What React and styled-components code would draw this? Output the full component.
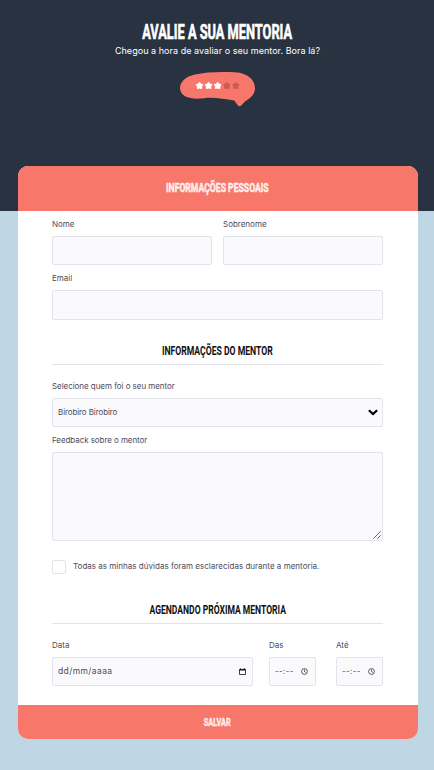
import React from 'react';
import styled, { createGlobalStyle } from 'styled-components';

const GlobalStyle = createGlobalStyle`
  * { box-sizing: border-box; }
  body {
    margin: 0;
    background: #bfd6e4;
    font-family: Inter, "Liberation Sans", sans-serif;
    color: #4e4b58;
  }
`;

const Page = styled.div`
  height: 770px;
  overflow: hidden;
  background: #bfd6e4;
`;

const Hero = styled.header`
  height: 211px;
  padding-top: 20px;
  display: flex;
  flex-direction: column;
  align-items: center;
  background: #293241;
  color: #fff;
`;

const Condensed = styled.span`
  display: block;
  white-space: nowrap;
  font-family: Roboto, "Liberation Sans", sans-serif;
  font-weight: 700;
  font-size: ${(p) => p.$size}px;
  -webkit-text-stroke: ${(p) => p.$stroke || 0}px currentColor;
  transform: scaleX(${(p) => p.$squeeze});
`;

const Title = styled.h1`
  margin: 0;
  height: 24px;
  line-height: 25px;
`;

const Subtitle = styled.p`
  margin: 0 0 0 1px;
  font-size: 9px;
  line-height: 14px;
  letter-spacing: 0.04px;
`;

const Bubble = styled.svg`
  display: block;
  width: 76px;
  height: 36px;
  margin: 13px 0 0 2px;
`;

const Card = styled.form`
  width: 400px;
  height: 573px;
  margin: -45px 0 0 18px;
  display: flex;
  flex-direction: column;
  border-radius: 10px;
  overflow: hidden;
  background: #fff;
`;

const CardHeader = styled.h2`
  margin: 0;
  height: 45px;
  padding: 0 1px 2px 0;
  display: flex;
  align-items: center;
  justify-content: center;
  background: #f7776a;
  color: #ffefed;
`;

const CardBody = styled.div`
  flex: 1;
  padding: 6px 35px 0 34px;
`;

const SectionTitle = styled.h2`
  margin: ${(p) => p.$top}px 0 14px;
  height: 26px;
  padding-top: 4px;
  line-height: 16px;
  display: flex;
  justify-content: center;
  border-bottom: 1px solid #e4e4ea;
  color: #111;
`;

const Row = styled.div`
  display: grid;
  grid-template-columns: ${(p) => p.$columns};
  column-gap: ${(p) => p.$gap || 0}px;
  justify-content: space-between;
`;

const Field = styled.div`
  height: 54px;
`;

const Label = styled.label`
  display: block;
  height: 19px;
  line-height: 14px;
  font-size: 8px;
  letter-spacing: ${(p) => p.$spacing || 0}px;
`;

const Control = styled.div`
  height: ${(p) => p.$height || 29}px;
  padding: 0 ${(p) => p.$padRight || 5}px 0 5px;
  display: flex;
  align-items: center;
  justify-content: space-between;
  border: 1px solid #e3e3ec;
  border-radius: 2px;
  background: #fafafc;
  font-size: 8px;
  line-height: 12px;
`;

const Value = styled.span`
  padding-bottom: 2px;
  white-space: nowrap;
  letter-spacing: ${(p) => p.$spacing || 0}px;
`;

const DateText = styled(Value)`
  font-size: 8.5px;
  letter-spacing: 0.4px;
`;

const TextArea = styled(Control)`
  height: 89px;
  align-items: flex-end;
  justify-content: flex-end;
  padding: 0 1px 1px;
`;

const Icon = styled.svg`
  display: block;
  flex: none;
  width: ${(p) => p.$w}px;
  height: ${(p) => p.$h}px;
`;

const CheckLine = styled.label`
  margin-top: 19px;
  height: 14px;
  display: flex;
  align-items: center;
  gap: 7px;
  font-size: 8px;
  letter-spacing: 0.02px;
`;

const CheckBox = styled.span`
  width: 14px;
  height: 14px;
  border: 1px solid #e3e3ec;
  border-radius: 2px;
`;

const SaveButton = styled.button`
  height: 34px;
  padding: 0 2px 0 0;
  border: 0;
  display: flex;
  align-items: center;
  justify-content: center;
  background: #f7776a;
  color: #ffefed;
`;

const TimeGroup = styled.div`
  width: 114px;
  display: flex;
  justify-content: space-between;
`;

const TimeSlot = styled(Field)`
  width: 47px;
`;

const STAR =
  'M0-3.9 1.5-2 3.9-1.3 2.6.9 2.6 3.3 0 2.8-2.6 3.3-2.6.9-3.9-1.3-1.5-2Z';

function Rating() {
  return (
    <Bubble viewBox="0 0 76 36">
      <path
        fill="#f7776a"
        d="M0 17.2C0 11 5.500 5.500 15 3.500C26 .8 41 .5 55 1.200C68 2 75 9 75 17.500C75 22.500 71.500 26.500 66 29.800C64.300 31.200 63 32.500 61.500 34.200C60 35.900 58.300 35.400 57.200 33.600L54.300 29.400C44 28 33 25.700 24 27.200C17 28 10 28 5 25.300C1.500 23 0 20 0 17.200Z"
      />
      {[19.5, 28.6, 37.7, 46.8, 55.8].map((x, i) => (
        <path
          key={x}
          d={STAR}
          transform={`translate(${x} 14.700) scale(.86)`}
          fill={i < 3 ? '#fff' : '#cc5c54'}
          stroke={i < 3 ? '#fff' : '#cc5c54'}
          strokeWidth="1.1"
          strokeLinejoin="round"
        />
      ))}
    </Bubble>
  );
}

function ClockIcon() {
  return (
    <Icon $w={7} $h={7} viewBox="0 0 7 7" fill="none" stroke="#333">
      <circle cx="3.5" cy="3.5" r="2.9" strokeWidth=".8" />
      <path d="M3.500 1.600V3.600L4.900 4.400" strokeWidth=".8" />
    </Icon>
  );
}

function TimeField({ label }) {
  return (
    <TimeSlot>
      <Label>{label}</Label>
      <Control $padRight={7}>
        <Value $spacing={0.35}>--:--</Value>
        <ClockIcon />
      </Control>
    </TimeSlot>
  );
}

export default function App() {
  return (
    <>
      <GlobalStyle />
      <Page>
        <Hero>
          <Title>
            <Condensed $size={19.5} $squeeze={0.656} $stroke={0.6}>AVALIE A SUA MENTORIA</Condensed>
          </Title>
          <Subtitle>Chegou a hora de avaliar o seu mentor. Bora lá?</Subtitle>
          <Rating />
        </Hero>
        <Card>
          <CardHeader>
            <Condensed $size={12.5} $squeeze={0.69} $stroke={0.5}>INFORMAÇÕES PESSOAIS</Condensed>
          </CardHeader>
          <CardBody>
            <Row $columns="160px 160px" $gap={11}>
              <Field>
                <Label>Nome</Label>
                <Control />
              </Field>
              <Field>
                <Label>Sobrenome</Label>
                <Control />
              </Field>
            </Row>
            <Field>
              <Label>Email</Label>
              <Control $height={30} />
            </Field>
            <SectionTitle $top={14}>
              <Condensed $size={12.5} $squeeze={0.69}>INFORMAÇÕES DO MENTOR</Condensed>
            </SectionTitle>
            <Field>
              <Label $spacing={-0.05}>Selecione quem foi o seu mentor</Label>
              <Control $padRight={4}>
                <Value $spacing={-0.1}>Birobiro Birobiro</Value>
                <Icon $w={10} $h={7} viewBox="0 0 10 7" fill="none" stroke="#000" strokeWidth="2.2">
                  <path d="M.9 1.200 5 5.100 9.100 1.200" />
                </Icon>
              </Control>
            </Field>
            <Label $spacing={-0.07}>Feedback sobre o mentor</Label>
            <TextArea>
              <Icon $w={8} $h={8} viewBox="0 0 8 8" fill="none" stroke="#555" strokeWidth=".9">
                <path d="M.3 7.700 7.700.3M4.300 7.700 7.700 4.300" />
              </Icon>
            </TextArea>
            <CheckLine>
              <CheckBox />
              <Value $spacing={0.02}>Todas as minhas dúvidas foram esclarecidas durante a mentoria.</Value>
            </CheckLine>
            <SectionTitle $top={24}>
              <Condensed $size={12.5} $squeeze={0.684}>AGENDANDO PRÓXIMA MENTORIA</Condensed>
            </SectionTitle>
            <Row $columns="201px 114px">
              <Field>
                <Label>Data</Label>
                <Control $padRight={6}>
                  <DateText>dd/mm/aaaa</DateText>
                  <Icon $w={7} $h={7} viewBox="0 0 7 7" fill="none" stroke="#111">
                    <path d="M.5 1.500H6.500V6.500H.5ZM1.700 0V1.500M5.300 0V1.500" strokeWidth=".8" />
                    <path d="M.5 1.900H6.500" strokeWidth="1.300" />
                  </Icon>
                </Control>
              </Field>
              <TimeGroup>
                <TimeField label="Das" />
                <TimeField label="Até" />
              </TimeGroup>
            </Row>
          </CardBody>
          <SaveButton type="button">
            <Condensed $size={11} $squeeze={0.67} $stroke={0.4}>SALVAR</Condensed>
          </SaveButton>
        </Card>
      </Page>
    </>
  );
}
